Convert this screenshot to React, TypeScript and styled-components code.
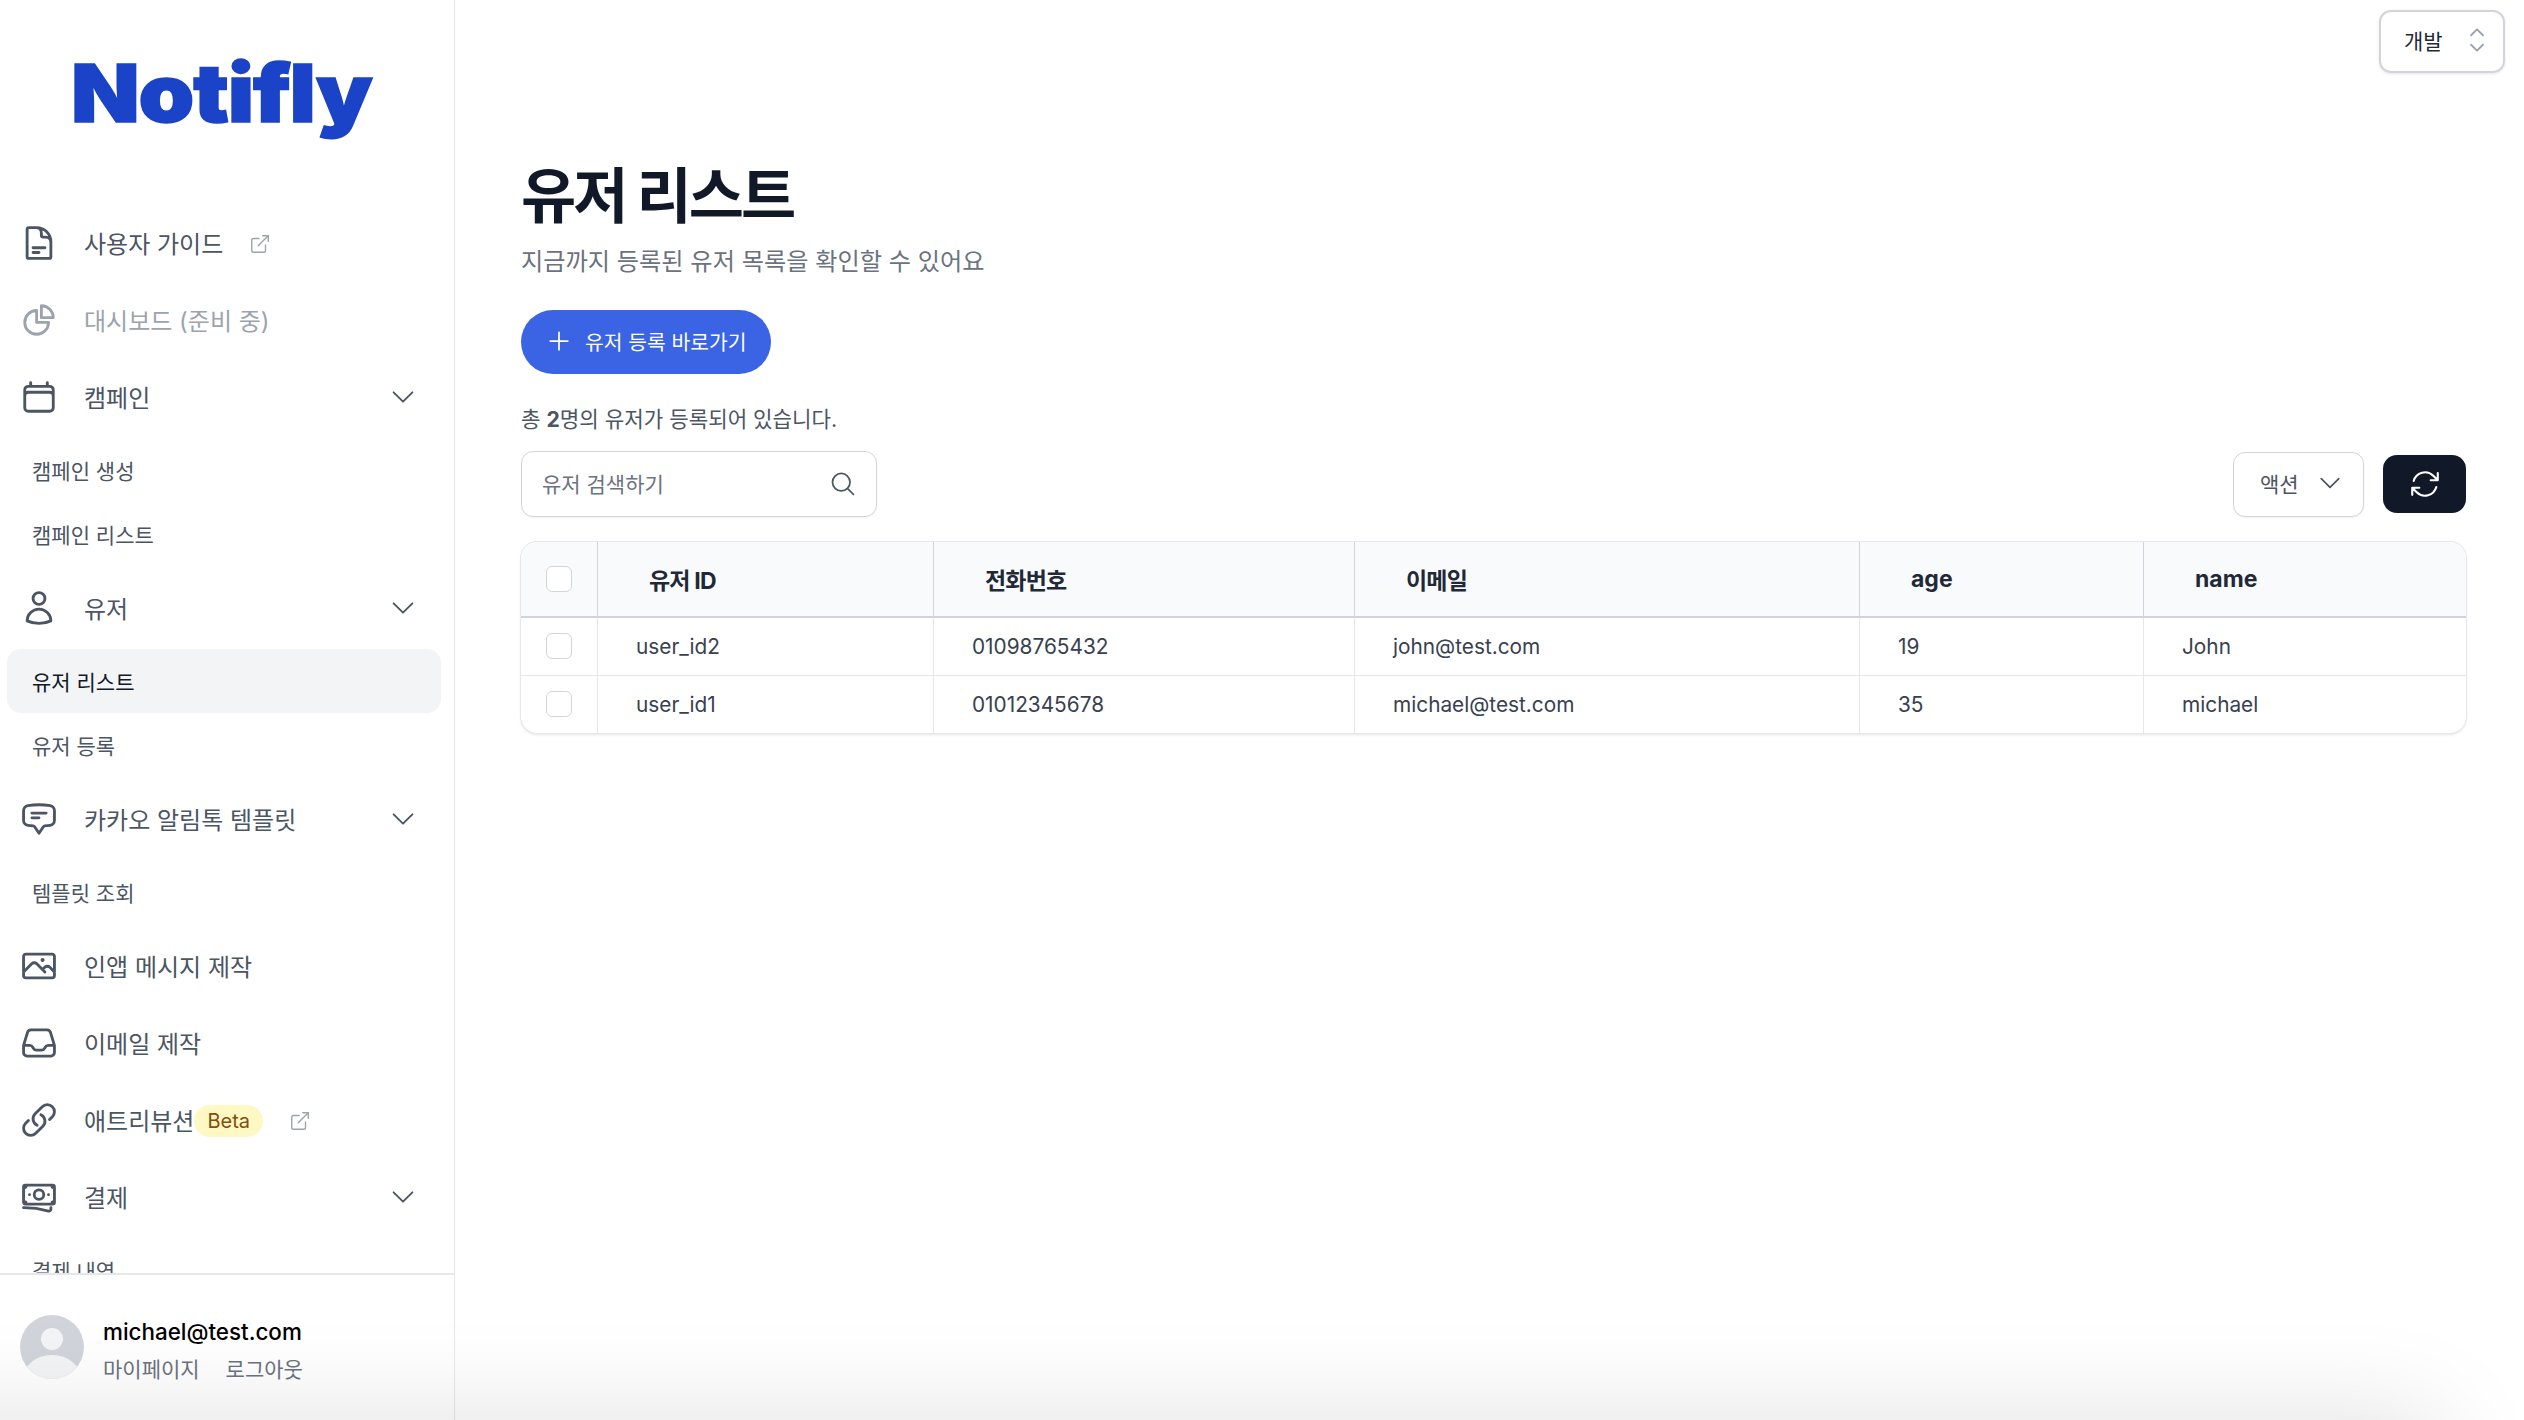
import React from 'react';
import styled, { createGlobalStyle } from 'styled-components';
import {
  HiOutlineDocumentText, HiOutlineChartPie, HiOutlineCalendar, HiOutlineUser,
  HiOutlineChatBubbleBottomCenterText, HiOutlinePhoto, HiOutlineInbox, HiOutlineLink,
  HiOutlineBanknotes, HiOutlineChevronDown, HiOutlineChevronUpDown, HiOutlineMagnifyingGlass,
  HiOutlinePlus, HiOutlineArrowPath,
} from 'react-icons/hi2';
import { ExternalLink } from 'lucide-react';

const Global = createGlobalStyle`
  html, body { margin: 0; padding: 0; background: #fff; overflow: hidden; }
  body { font-family: Inter, "Noto Sans CJK KR", sans-serif; color: #111827; }
  * { box-sizing: border-box; }
`;

const Shell = styled.div`
  position: relative;
  display: flex;
  width: 2524px;
  height: 1420px;
  overflow: hidden;
  background: #fff;
`;
const BottomShade = styled.div`
  position: absolute;
  top: 100%;
  left: -200px;
  right: 87px;
  height: 300px;
  box-shadow: 0 0 106px rgba(0, 0, 0, 0.13);
  pointer-events: none;
`;
const Sidebar = styled.aside`
  flex: 0 0 455px;
  display: flex;
  flex-direction: column;
  height: 100%;
  border-right: 1px solid #e5e7eb;
`;
const LogoArea = styled.div`
  flex: 0 0 204px;
  padding: 43px 0 0 71px;
`;
const Logo = styled.span`
  display: inline-block;
  font-size: 80px;
  line-height: 100px;
  font-weight: 900;
  letter-spacing: -1px;
  color: #1b43c8;
  -webkit-text-stroke: 1.5px #1b43c8;
  transform: scaleX(1.115);
  transform-origin: left center;
`;
const Nav = styled.nav`
  flex: 1;
  min-height: 0;
  overflow: hidden;
`;
const NavRow = styled.div<{ $muted?: boolean }>`
  display: flex;
  align-items: center;
  gap: 26px;
  height: 77px;
  padding: 0 36px 0 20px;
  font-size: 24px;
  color: ${p => (p.$muted ? '#9ca3af' : '#4b5563')};
`;
const NavLabel = styled.span`
  display: flex;
  align-items: center;
  white-space: nowrap;
`;
const Badge = styled.span`
  display: inline-flex;
  align-items: center;
  height: 32px;
  padding: 0 13px;
  border-radius: 16px;
  background: #fef9c3;
  color: #854d0e;
  font-size: 20px;
  margin-top: 3px;
`;
const ExtIcon = styled.span`
  display: inline-flex;
  margin-left: 26px;
  margin-top: 2px;
  color: #9ca3af;
`;
const Chevron = styled.span`
  display: inline-flex;
  margin-left: auto;
  color: #4b5563;
`;
const SubList = styled.div`
  padding: 3px 0 3px;
`;
const SubItem = styled.div<{ $active?: boolean }>`
  display: flex;
  align-items: center;
  height: 64px;
  margin: 0 13px 0 7px;
  padding-left: 25px;
  border-radius: 14px;
  font-size: 21px;
  color: ${p => (p.$active ? '#111827' : '#4b5563')};
  background: ${p => (p.$active ? '#f3f4f6' : 'transparent')};
`;
const Footer = styled.div`
  flex: 0 0 147px;
  display: flex;
  gap: 19px;
  padding: 40px 0 0 20px;
  border-top: 2px solid #e5e7eb;
`;
const Avatar = styled.svg`
  width: 64px;
  height: 64px;
  border-radius: 50%;
  flex: none;
`;
const FooterText = styled.div`
  display: flex;
  flex-direction: column;
  gap: 8px;
  margin-top: 2px;
`;
const Email = styled.div`
  font-size: 22.4px;
  line-height: 30px;
  font-weight: 500;
  color: #000;
`;
const FooterLinks = styled.div`
  display: flex;
  gap: 26px;
  font-size: 21px;
  line-height: 30px;
  color: #6b7280;
`;
const Main = styled.main`
  flex: 1;
  min-width: 0;
  display: flex;
  flex-direction: column;
`;
const TopBar = styled.div`
  display: flex;
  justify-content: flex-end;
  padding: 10px 19px 0 0;
`;
const EnvSelect = styled.div`
  display: flex;
  align-items: center;
  justify-content: space-between;
  width: 126px;
  height: 63px;
  padding: 0 7px 3px 23px;
  border: 2px solid #d1d5db;
  border-radius: 12px;
  box-shadow: 0 1px 3px rgba(0, 0, 0, 0.1);
  font-size: 21px;
  color: #1f2937;
  svg { color: #9ca3af; }
`;
const Content = styled.div`
  padding: 87px 58px 0 66px;
`;
const Title = styled.h1`
  margin: 0;
  font-size: 60px;
  line-height: 72px;
  font-weight: 700;
  letter-spacing: -3px;
  color: #111827;
`;
const Subtitle = styled.p`
  margin: 12px 0 0;
  font-size: 24.2px;
  line-height: 36px;
  color: #6b7280;
`;
const PrimaryButton = styled.button`
  display: flex;
  align-items: center;
  gap: 12px;
  height: 64px;
  width: 250px;
  margin-top: 30px;
  padding: 0 0 2px 24px;
  border: 0;
  border-radius: 32px;
  background: #3a64e4;
  color: #fff;
  font: inherit;
  font-size: 20.4px;
  white-space: nowrap;
`;
const Count = styled.p`
  margin: 30px 0 0;
  font-size: 21.2px;
  line-height: 30px;
  color: #4b5563;
  b { font-weight: 700; }
`;
const Toolbar = styled.div`
  display: flex;
  align-items: center;
  justify-content: space-between;
  margin-top: 17px;
`;
const Search = styled.label`
  display: flex;
  align-items: center;
  width: 356px;
  height: 66px;
  padding: 0 19px 0 20px;
  border: 1.5px solid #d1d5db;
  border-radius: 12px;
  box-shadow: 0 1px 2px rgba(0, 0, 0, 0.05);
  color: #4b5563;
`;
const SearchInput = styled.input`
  flex: 1;
  min-width: 0;
  border: 0;
  outline: 0;
  padding: 0;
  font: inherit;
  font-size: 21px;
  &::placeholder { color: #6b7280; opacity: 1; }
`;
const ToolGroup = styled.div`
  display: flex;
  align-items: center;
  gap: 19px;
`;
const ActionButton = styled.button`
  display: flex;
  align-items: center;
  justify-content: space-between;
  width: 131px;
  height: 65px;
  padding: 0 19px 2px 26px;
  border: 1.5px solid #d1d5db;
  border-radius: 12px;
  background: #fff;
  box-shadow: 0 1px 2px rgba(0, 0, 0, 0.05);
  font: inherit;
  font-size: 21px;
  color: #4b5563;
`;
const RefreshButton = styled.button`
  display: flex;
  align-items: center;
  justify-content: center;
  width: 83px;
  height: 58px;
  padding: 0;
  border: 0;
  border-radius: 14px;
  background: #111827;
  color: #fff;
`;
const TableWrap = styled.div`
  margin-top: 25px;
  border-radius: 16px;
  overflow: hidden;
  box-shadow: 0 0 0 1px #e5e7eb, 0 2px 3px rgba(0, 0, 0, 0.1);
`;
const Table = styled.table`
  width: 100%;
  table-layout: fixed;
  border-collapse: separate;
  border-spacing: 0;
`;
const Th = styled.th<{ $tight?: boolean }>`
  height: 76px;
  padding: 0 0 0 51px;
  text-align: left;
  background: #f9fafb;
  border-bottom: 2px solid #d1d5db;
  border-left: 1.5px solid #d1d5db;
  font-size: 23px;
  font-weight: 700;
  letter-spacing: ${p => (p.$tight ? '-0.8px' : '0')};
  color: #1f2937;
  &:first-child { border-left: 0; padding: 0 0 0 25px; }
`;
const Td = styled.td`
  height: 57.5px;
  padding: 0 0 0 38px;
  border-left: 1.5px solid #e5e7eb;
  border-bottom: 1.5px solid #e5e7eb;
  font-size: 20.8px;
  color: #374151;
  &:first-child { border-left: 0; padding: 0 0 0 25px; }
  tr:last-child > & { border-bottom: 0; }
`;
const Check = styled.span`
  display: block;
  width: 26px;
  height: 26px;
  border: 1.5px solid #d1d5db;
  border-radius: 6px;
  background: #fff;
`;

type IconT = React.ComponentType<{ size?: number; strokeWidth?: number }>;
type Item = { icon: IconT; label: string; ext?: boolean; beta?: boolean; muted?: boolean; sub?: { label: string; active?: boolean }[] };

const items: Item[] = [
  { icon: HiOutlineDocumentText, label: '사용자 가이드', ext: true },
  { icon: HiOutlineChartPie, label: '대시보드 (준비 중)', muted: true },
  { icon: HiOutlineCalendar, label: '캠페인', sub: [{ label: '캠페인 생성' }, { label: '캠페인 리스트' }] },
  { icon: HiOutlineUser, label: '유저', sub: [{ label: '유저 리스트', active: true }, { label: '유저 등록' }] },
  { icon: HiOutlineChatBubbleBottomCenterText, label: '카카오 알림톡 템플릿', sub: [{ label: '템플릿 조회' }] },
  { icon: HiOutlinePhoto, label: '인앱 메시지 제작' },
  { icon: HiOutlineInbox, label: '이메일 제작' },
  { icon: HiOutlineLink, label: '애트리뷰션', beta: true, ext: true },
  { icon: HiOutlineBanknotes, label: '결제', sub: [{ label: '결제 내역' }] },
];

const columns = [
  { label: '유저 ID', tight: true },
  { label: '전화번호', tight: true },
  { label: '이메일', tight: true },
  { label: 'age' },
  { label: 'name' },
];
const rows = [
  ['user_id2', '01098765432', 'john@test.com', '19', 'John'],
  ['user_id1', '01012345678', 'michael@test.com', '35', 'michael'],
];

const colWidths = [76, 336, 421, 505, 284, 323];

export default function App() {
  return (
    <Shell>
      <Global />
      <Sidebar>
        <LogoArea><Logo>Notifly</Logo></LogoArea>
        <Nav>
          {items.map(it => (
            <React.Fragment key={it.label}>
              <NavRow $muted={it.muted}>
                <it.icon size={38} strokeWidth={1.8} />
                <NavLabel>
                  {it.label}
                  {it.beta && <Badge>Beta</Badge>}
                  {it.ext && <ExtIcon><ExternalLink size={22} strokeWidth={1.5} /></ExtIcon>}
                </NavLabel>
                {it.sub && <Chevron><HiOutlineChevronDown size={30} /></Chevron>}
              </NavRow>
              {it.sub && (
                <SubList>
                  {it.sub.map(s => <SubItem key={s.label} $active={s.active}>{s.label}</SubItem>)}
                </SubList>
              )}
            </React.Fragment>
          ))}
        </Nav>
        <Footer>
          <Avatar viewBox="0 0 64 64">
            <rect width="64" height="64" fill="#d1d5db" />
            <circle cx="32" cy="24" r="11" fill="#f3f4f6" />
            <ellipse cx="32" cy="64" rx="29" ry="24" fill="#f3f4f6" />
          </Avatar>
          <FooterText>
            <Email>michael@test.com</Email>
            <FooterLinks><span>마이페이지</span><span>로그아웃</span></FooterLinks>
          </FooterText>
        </Footer>
      </Sidebar>
      <Main>
        <TopBar>
          <EnvSelect>개발<HiOutlineChevronUpDown size={38} strokeWidth={1.2} /></EnvSelect>
        </TopBar>
        <Content>
          <Title>유저 리스트</Title>
          <Subtitle>지금까지 등록된 유저 목록을 확인할 수 있어요</Subtitle>
          <PrimaryButton><HiOutlinePlus size={28} />유저 등록 바로가기</PrimaryButton>
          <Count>총 <b>2</b>명의 유저가 등록되어 있습니다.</Count>
          <Toolbar>
            <Search>
              <SearchInput placeholder="유저 검색하기" />
              <HiOutlineMagnifyingGlass size={28} />
            </Search>
            <ToolGroup>
              <ActionButton>액션<HiOutlineChevronDown size={28} /></ActionButton>
              <RefreshButton><HiOutlineArrowPath size={34} /></RefreshButton>
            </ToolGroup>
          </Toolbar>
          <TableWrap>
            <Table>
              <colgroup>
                {colWidths.map((w, i) => <col key={i} style={{ width: w }} />)}
              </colgroup>
              <thead>
                <tr>
                  <Th><Check /></Th>
                  {columns.map(c => <Th key={c.label} $tight={c.tight}>{c.label}</Th>)}
                </tr>
              </thead>
              <tbody>
                {rows.map(r => (
                  <tr key={r[0]}>
                    <Td><Check /></Td>
                    {r.map((v, i) => <Td key={i}>{v}</Td>)}
                  </tr>
                ))}
              </tbody>
            </Table>
          </TableWrap>
        </Content>
      </Main>
      <BottomShade />
    </Shell>
  );
}
